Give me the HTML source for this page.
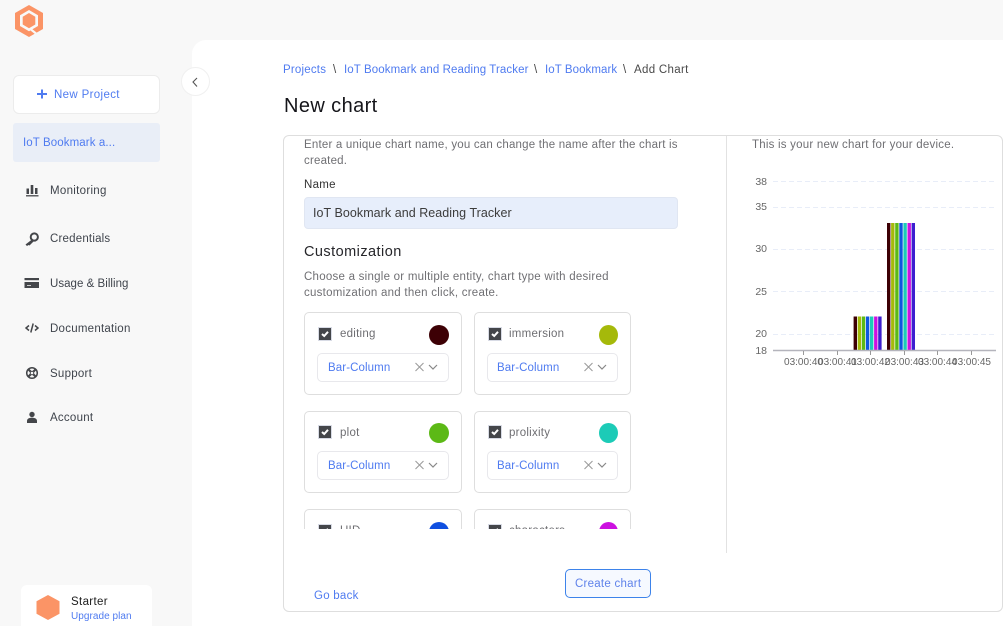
<!DOCTYPE html>
<html><head><meta charset="utf-8"><style>
*{box-sizing:border-box}
html,body{margin:0;padding:0}
body{width:1003px;height:626px;overflow:hidden;background:#f8f8f8;position:relative;font-family:"Liberation Sans",sans-serif;font-size:11px;color:#444}
.a,.t{position:absolute}
.t{white-space:nowrap;line-height:14px}
.blue{color:#4f7bf0}
.nav{color:#3f444c;font-size:11.5px;letter-spacing:.25px;left:50px}
.grey{color:#6f6f73;font-size:11.5px;letter-spacing:.2px}
.card{position:absolute;width:158px;height:83px;border:1px solid #dedede;border-radius:5px;background:#fff}
.card.r{width:157px}
.cb{position:absolute;left:13px;top:14px;width:14px;height:14px;background:#44464a;border:1px solid #d8dbe5}
.cb svg{position:absolute;left:0;top:0}
.lb{position:absolute;left:35px;top:14px;font-size:11.5px;letter-spacing:.25px;color:#6e6e72;line-height:14px}
.dot{position:absolute;left:124px;top:12px;width:20px;height:20px;border-radius:50%}
.sel{position:absolute;left:12px;top:40px;width:132px;height:29px;border:1px solid #e8e8ec;border-radius:5px}
.sel span{position:absolute;left:10px;top:7px;font-size:11.5px;letter-spacing:.1px;color:#4f7bf0;line-height:14px}
.sel svg{position:absolute;left:96px;top:8px}
.r .lb{left:34px}
.r .dot{width:19px}
.r .sel{width:131px}
.r .sel span{left:9px}
.r .sel svg{left:95px}
</style></head><body>

<svg class="a" style="left:0;top:0" width="50" height="40" viewBox="0 0 50 40">
<path d="M29 5 L43 13 V29 L29 37 L15 29 V13 Z" fill="#fb9466"/>
<path d="M29 10 L38 15.200 V26 L29 31.200 L20 26 V15.200 Z" fill="#f8f8f8"/>
<path d="M29 13 L35.300 16.700 V24.500 L29 28.200 L22.700 24.500 V16.700 Z" fill="#fb9466"/>
<path d="M31 29.500 L36 33.500" stroke="#f8f8f8" stroke-width="2.200"/>
</svg>

<div class="a" style="left:192px;top:40px;width:811px;height:586px;background:#fff;border-top-left-radius:14px"></div>

<div class="a" style="left:13px;top:75px;width:147px;height:39px;background:#fff;border:1px solid #ececec;border-radius:6px"></div>
<svg class="a" style="left:36px;top:88px" width="12" height="12" viewBox="0 0 12 12"><path d="M6 1.500V10.500M1 6H11" stroke="#4f7bf0" stroke-width="2"/></svg>
<div class="t blue" style="left:54px;top:88px;font-size:11.5px;letter-spacing:.35px">New Project</div>

<div class="a" style="left:13px;top:123px;width:147px;height:39px;background:#e9eef7;border-radius:3px"></div>
<div class="t blue" style="left:23px;top:136px;font-size:11.500px;letter-spacing:.1px">IoT Bookmark a...</div>

<div class="a" style="left:181px;top:67px;width:29px;height:29px;border-radius:50%;background:#fff;border:1px solid #f0f0f0"></div>
<svg class="a" style="left:190px;top:76px" width="10" height="12" viewBox="0 0 10 12"><path d="M7 2 L3 6 L7 10.500" fill="none" stroke="#555" stroke-width="1.100"/></svg>

<svg class="a" style="left:25px;top:183px" width="14" height="14" viewBox="0 0 14 14"><path d="M1.500 5.500h2.500V11H1.500zM5.700 2H8.300V11H5.700zM10 5h2.500v6H10z" fill="#44464a"/><path d="M1 12.800H13.500" stroke="#44464a" stroke-width="1.300"/></svg>
<div class="t nav" style="top:184px;letter-spacing:.3px">Monitoring</div>

<svg class="a" style="left:24px;top:231px" width="16" height="16" viewBox="0 0 16 16"><circle cx="10.300" cy="6" r="3.600" fill="none" stroke="#44464a" stroke-width="2"/><path d="M8 8.500 L1.500 13.500 L3 15 L4.500 14 L5.500 14.500 L10 10Z" fill="#44464a"/></svg>
<div class="t nav" style="top:232px;letter-spacing:.2px">Credentials</div>

<svg class="a" style="left:24px;top:277px" width="16" height="13" viewBox="0 0 16 13"><path d="M.5 1h14.500v2.200H.5z" fill="#44464a"/><path d="M.5 5h14.500v6H.5z" fill="#44464a"/><path d="M3 8h4v1H3z" fill="#ccc"/></svg>
<div class="t nav" style="top:277px;letter-spacing:.03px">Usage &amp; Billing</div>

<svg class="a" style="left:25px;top:322px" width="14" height="12" viewBox="0 0 14 12"><path d="M4 3.500 L1 6 L4 8.500M10 3.500 L13 6 L10 8.500M8.200 1.500 L5.800 10.500" fill="none" stroke="#44464a" stroke-width="1.500"/></svg>
<div class="t nav" style="top:322px">Documentation</div>

<svg class="a" style="left:25px;top:366px" width="14" height="14" viewBox="0 0 14 14"><circle cx="7" cy="7" r="5.300" fill="none" stroke="#44464a" stroke-width="1.500"/><circle cx="7" cy="7" r="1.800" fill="none" stroke="#44464a" stroke-width="1"/><path d="M3 3L5.500 5.500M11 3L8.500 5.500M3 11L5.500 8.500M11 11L8.500 8.500" stroke="#44464a" stroke-width="2.200"/></svg>
<div class="t nav" style="top:367px">Support</div>

<svg class="a" style="left:25px;top:410px" width="14" height="14" viewBox="0 0 14 14"><circle cx="7" cy="4.500" r="2.700" fill="#44464a"/><path d="M2 13 V11 C2 8.500 4.500 7.800 7 7.800 S12 8.500 12 11 V13Z" fill="#44464a"/></svg>
<div class="t nav" style="top:411px">Account</div>

<div class="a" style="left:21px;top:585px;width:131px;height:41px;background:#fff;border-radius:6px 6px 0 0"></div>
<svg class="a" style="left:36px;top:595px" width="24" height="25" viewBox="0 0 24 25"><path d="M12 0 L23.500 6.300 V18.700 L12 25 L0.500 18.700 V6.300Z" fill="#fb9466"/></svg>
<div class="t" style="left:71px;top:595px;font-size:11.500px;color:#1c1c1c;letter-spacing:.35px">Starter</div>
<div class="t blue" style="left:71px;top:610px;font-size:10px;letter-spacing:.05px">Upgrade plan</div>

<div class="t" style="left:283px;top:63px;font-size:11.500px;letter-spacing:.2px;color:#4f7bf0">Projects</div>
<div class="t" style="left:333px;top:63px;font-size:11.500px;color:#444">\</div>
<div class="t" style="left:344px;top:63px;font-size:11.500px;letter-spacing:.1px;color:#4f7bf0">IoT Bookmark and Reading Tracker</div>
<div class="t" style="left:534px;top:63px;font-size:11.500px;color:#444">\</div>
<div class="t" style="left:545px;top:63px;font-size:11.500px;letter-spacing:.07px;color:#4f7bf0">IoT Bookmark</div>
<div class="t" style="left:623px;top:63px;font-size:11.500px;color:#444">\</div>
<div class="t" style="left:634px;top:63px;font-size:11.500px;letter-spacing:.32px;color:#4a4a4a">Add Chart</div>

<div class="t" style="left:284px;top:95px;font-size:20px;line-height:22px;color:#15151a;letter-spacing:.4px">New chart</div>

<div class="a" style="left:283px;top:135px;width:720px;height:477px;border:1px solid #dedede;border-radius:6px;background:#fff"></div>
<div class="a" style="left:726px;top:136px;width:1px;height:417px;background:#e2e2e2"></div>

<div class="t grey" style="left:304px;top:138px">Enter a unique chart name, you can change the name after the chart is</div>
<div class="t grey" style="left:304px;top:154px">created.</div>
<div class="t" style="left:304px;top:178px;font-size:11.500px;letter-spacing:.3px;color:#333">Name</div>
<div class="a" style="left:304px;top:197px;width:374px;height:32px;background:#e7eefb;border:1px solid #e0e6f2;border-radius:4px"></div>
<div class="t" style="left:313px;top:206px;font-size:12.500px;letter-spacing:.05px;color:#3c3c3c">IoT Bookmark and Reading Tracker</div>
<div class="t" style="left:304px;top:244px;font-size:14.500px;line-height:17px;letter-spacing:.45px;color:#26262a">Customization</div>
<div class="t grey" style="left:304px;top:270px;letter-spacing:.25px">Choose a single or multiple entity, chart type with desired</div>
<div class="t grey" style="left:304px;top:286px;letter-spacing:.25px">customization and then click, create.</div>

<div class="a" style="left:284px;top:300px;width:440px;height:229px;overflow:hidden">
  <div class="card" style="left:20px;top:12px"><div class="cb"><svg width="12" height="12" viewBox="0 0 12 12"><path d="M3 6 L5.200 8 L9 3.800" fill="none" stroke="#fff" stroke-width="2"/></svg></div><div class="lb">editing</div><div class="dot" style="background:#3d0005"></div><div class="sel"><span>Bar-Column</span><svg width="26" height="12" viewBox="0 0 26 12"><path d="M1.500 1L9.500 9M9.500 1L1.500 9" stroke="#999" stroke-width="1"/><path d="M15 3L19 7L23 3" fill="none" stroke="#888" stroke-width="1.200"/></svg></div></div>
  <div class="card r" style="left:190px;top:12px"><div class="cb"><svg width="12" height="12" viewBox="0 0 12 12"><path d="M3 6 L5.200 8 L9 3.800" fill="none" stroke="#fff" stroke-width="2"/></svg></div><div class="lb">immersion</div><div class="dot" style="background:#a5b90a"></div><div class="sel"><span>Bar-Column</span><svg width="26" height="12" viewBox="0 0 26 12"><path d="M1.500 1L9.500 9M9.500 1L1.500 9" stroke="#999" stroke-width="1"/><path d="M15 3L19 7L23 3" fill="none" stroke="#888" stroke-width="1.200"/></svg></div></div>
  <div class="card" style="left:20px;top:111px;height:82px"><div class="cb" style="top:13px"><svg width="12" height="12" viewBox="0 0 12 12"><path d="M3 6 L5.200 8 L9 3.800" fill="none" stroke="#fff" stroke-width="2"/></svg></div><div class="lb" style="top:14px">plot</div><div class="dot" style="top:11px;background:#5cb916"></div><div class="sel" style="top:39px"><span>Bar-Column</span><svg width="26" height="12" viewBox="0 0 26 12"><path d="M1.500 1L9.500 9M9.500 1L1.500 9" stroke="#999" stroke-width="1"/><path d="M15 3L19 7L23 3" fill="none" stroke="#888" stroke-width="1.200"/></svg></div></div>
  <div class="card r" style="left:190px;top:111px;height:82px"><div class="cb" style="top:13px"><svg width="12" height="12" viewBox="0 0 12 12"><path d="M3 6 L5.200 8 L9 3.800" fill="none" stroke="#fff" stroke-width="2"/></svg></div><div class="lb" style="top:14px">prolixity</div><div class="dot" style="top:11px;background:#1ccbb7"></div><div class="sel" style="top:39px"><span>Bar-Column</span><svg width="26" height="12" viewBox="0 0 26 12"><path d="M1.500 1L9.500 9M9.500 1L1.500 9" stroke="#999" stroke-width="1"/><path d="M15 3L19 7L23 3" fill="none" stroke="#888" stroke-width="1.200"/></svg></div></div>
  <div class="card" style="left:20px;top:209px"><div class="cb"><svg width="12" height="12" viewBox="0 0 12 12"><path d="M3 6 L5.200 8 L9 3.800" fill="none" stroke="#fff" stroke-width="2"/></svg></div><div class="lb">UID</div><div class="dot" style="background:#0f4fe0"></div></div>
  <div class="card r" style="left:190px;top:209px"><div class="cb"><svg width="12" height="12" viewBox="0 0 12 12"><path d="M3 6 L5.200 8 L9 3.800" fill="none" stroke="#fff" stroke-width="2"/></svg></div><div class="lb">characters</div><div class="dot" style="background:#cc10e0"></div></div>
</div>

<div class="t blue" style="left:314px;top:589px;font-size:11.500px;letter-spacing:.25px">Go back</div>
<div class="a" style="left:565px;top:569px;width:86px;height:29px;border:1px solid #3d83ea;border-radius:5px;background:#f6f9ff"></div>
<div class="t blue" style="left:575px;top:577px;font-size:11.500px;letter-spacing:.25px;color:#5f82ea">Create chart</div>

<div class="t grey" style="left:752px;top:138px;letter-spacing:.22px">This is your new chart for your device.</div>

<svg class="a" style="left:745px;top:170px;font-family:'Liberation Sans',sans-serif" width="258" height="205" viewBox="745 170 258 205">
<g stroke="#e8edf8" stroke-width="1" stroke-dasharray="5 3">
<path d="M773 181.500H996M773 207.500H996M773 249.500H996M773 291.500H996M773 334.500H996"/>
</g>
<g fill="#666" font-size="10.500" text-anchor="end">
<text x="767" y="185">38</text><text x="767" y="210">35</text><text x="767" y="252">30</text><text x="767" y="295">25</text><text x="767" y="337">20</text><text x="767" y="354">18</text>
</g>
<g>
<rect x="853.600" y="316.500" width="3.400" height="34" fill="#3d0005"/><rect x="857.700" y="316.500" width="3.400" height="34" fill="#a5b90a"/><rect x="861.800" y="316.500" width="3.400" height="34" fill="#5cb916"/><rect x="865.900" y="316.500" width="3.400" height="34" fill="#0f56e0"/><rect x="870" y="316.500" width="3.400" height="34" fill="#1ccbb7"/><rect x="874.100" y="316.500" width="3.400" height="34" fill="#cc10e0"/><rect x="878.200" y="316.500" width="3.400" height="34" fill="#3d1fd0"/>
<rect x="887" y="223" width="3.400" height="127.500" fill="#3d0005"/><rect x="891.100" y="223" width="3.400" height="127.500" fill="#a5b90a"/><rect x="895.200" y="223" width="3.400" height="127.500" fill="#5cb916"/><rect x="899.300" y="223" width="3.400" height="127.500" fill="#0f56e0"/><rect x="903.400" y="223" width="3.400" height="127.500" fill="#1ccbb7"/><rect x="907.500" y="223" width="3.400" height="127.500" fill="#cc10e0"/><rect x="911.600" y="223" width="3.400" height="127.500" fill="#3d1fd0"/>
</g>
<path d="M773 350.500H996" stroke="#b4b4bc" stroke-width="1.500"/>
<path d="M803.500 351V355M837.500 351V355M870.500 351V355M904.500 351V355M937.500 351V355M971.500 351V355" stroke="#999" stroke-width="1"/>
<g fill="#666" font-size="10" text-anchor="middle">
<text x="803.500" y="365">03:00:40</text><text x="837.500" y="365">03:00:41</text><text x="870.500" y="365">03:00:42</text><text x="904.500" y="365">03:00:43</text><text x="937.500" y="365">03:00:44</text><text x="971.500" y="365">03:00:45</text>
</g>
</svg>
</body></html>
